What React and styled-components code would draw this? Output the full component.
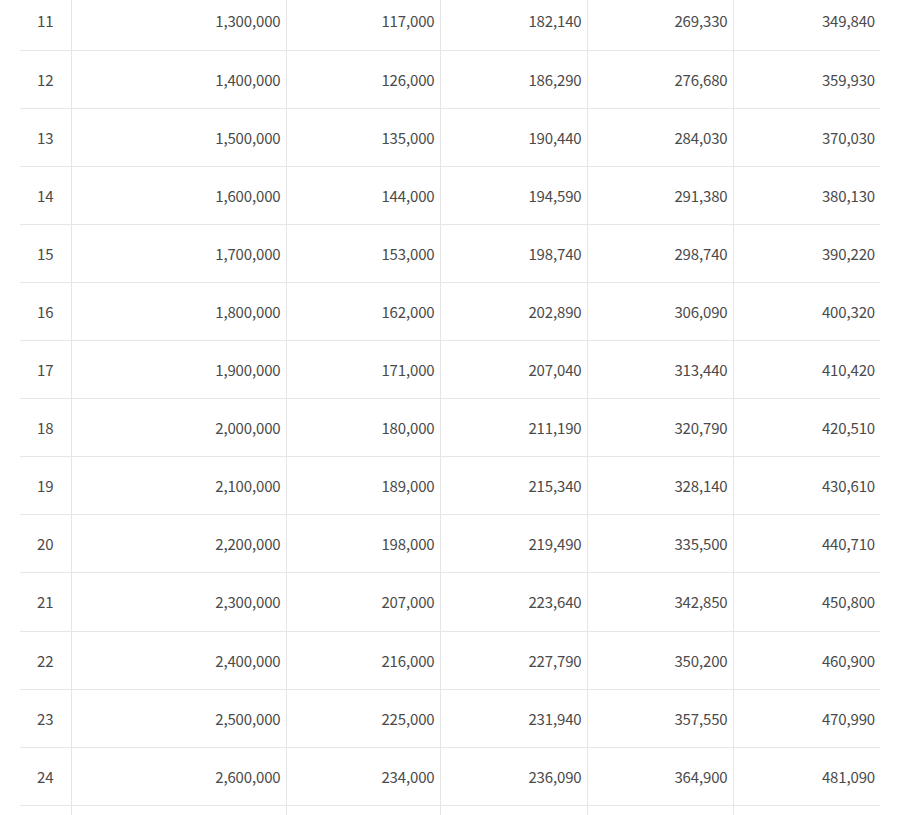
import React from "react";
import styled, { createGlobalStyle } from "styled-components";

const ROWS = [
  [11, "1,300,000", "117,000", "182,140", "269,330", "349,840"],
  [12, "1,400,000", "126,000", "186,290", "276,680", "359,930"],
  [13, "1,500,000", "135,000", "190,440", "284,030", "370,030"],
  [14, "1,600,000", "144,000", "194,590", "291,380", "380,130"],
  [15, "1,700,000", "153,000", "198,740", "298,740", "390,220"],
  [16, "1,800,000", "162,000", "202,890", "306,090", "400,320"],
  [17, "1,900,000", "171,000", "207,040", "313,440", "410,420"],
  [18, "2,000,000", "180,000", "211,190", "320,790", "420,510"],
  [19, "2,100,000", "189,000", "215,340", "328,140", "430,610"],
  [20, "2,200,000", "198,000", "219,490", "335,500", "440,710"],
  [21, "2,300,000", "207,000", "223,640", "342,850", "450,800"],
  [22, "2,400,000", "216,000", "227,790", "350,200", "460,900"],
  [23, "2,500,000", "225,000", "231,940", "357,550", "470,990"],
  [24, "2,600,000", "234,000", "236,090", "364,900", "481,090"],
  [25, "", "", "", "", ""],
];

const COL_WIDTHS = [51, 215, 154, 147, 146, 147];

const GlobalStyle = createGlobalStyle`
  html, body {
    margin: 0;
    padding: 0;
    background: #fff;
    overflow: hidden;
  }
  body {
    font-family: "Noto Sans CJK KR", "Noto Sans", sans-serif;
  }
`;

const Page = styled.div`
  padding: 0 28px 0 20px;
  height: 815px;
  overflow: hidden;
`;

const Table = styled.table`
  width: 860px;
  margin-top: -8px;
  border-collapse: collapse;
  table-layout: fixed;
  font-size: 15px;
  color: #4a4a4a;
`;

const Row = styled.tr`
  height: 58.1px;
  border-bottom: 1px solid #e6e6e6;
`;

const Cell = styled.td`
  padding: 0 5px;
  text-align: ${(p) => (p.$index ? "right" : "center")};
  vertical-align: middle;
  border-left: ${(p) => (p.$index ? "1px solid #e6e6e6" : "none")};
  letter-spacing: -0.15px;
  white-space: nowrap;
`;

export default function App() {
  return (
    <>
      <GlobalStyle />
      <Page>
        <Table>
          <colgroup>
            {COL_WIDTHS.map((w, i) => (
              <col key={i} style={{ width: w }} />
            ))}
          </colgroup>
          <tbody>
            {ROWS.map((row) => (
              <Row key={row[0]}>
                {row.map((v, i) => (
                  <Cell key={i} $index={i}>
                    {i === 0 && !row[1] ? "" : v}
                  </Cell>
                ))}
              </Row>
            ))}
          </tbody>
        </Table>
      </Page>
    </>
  );
}
